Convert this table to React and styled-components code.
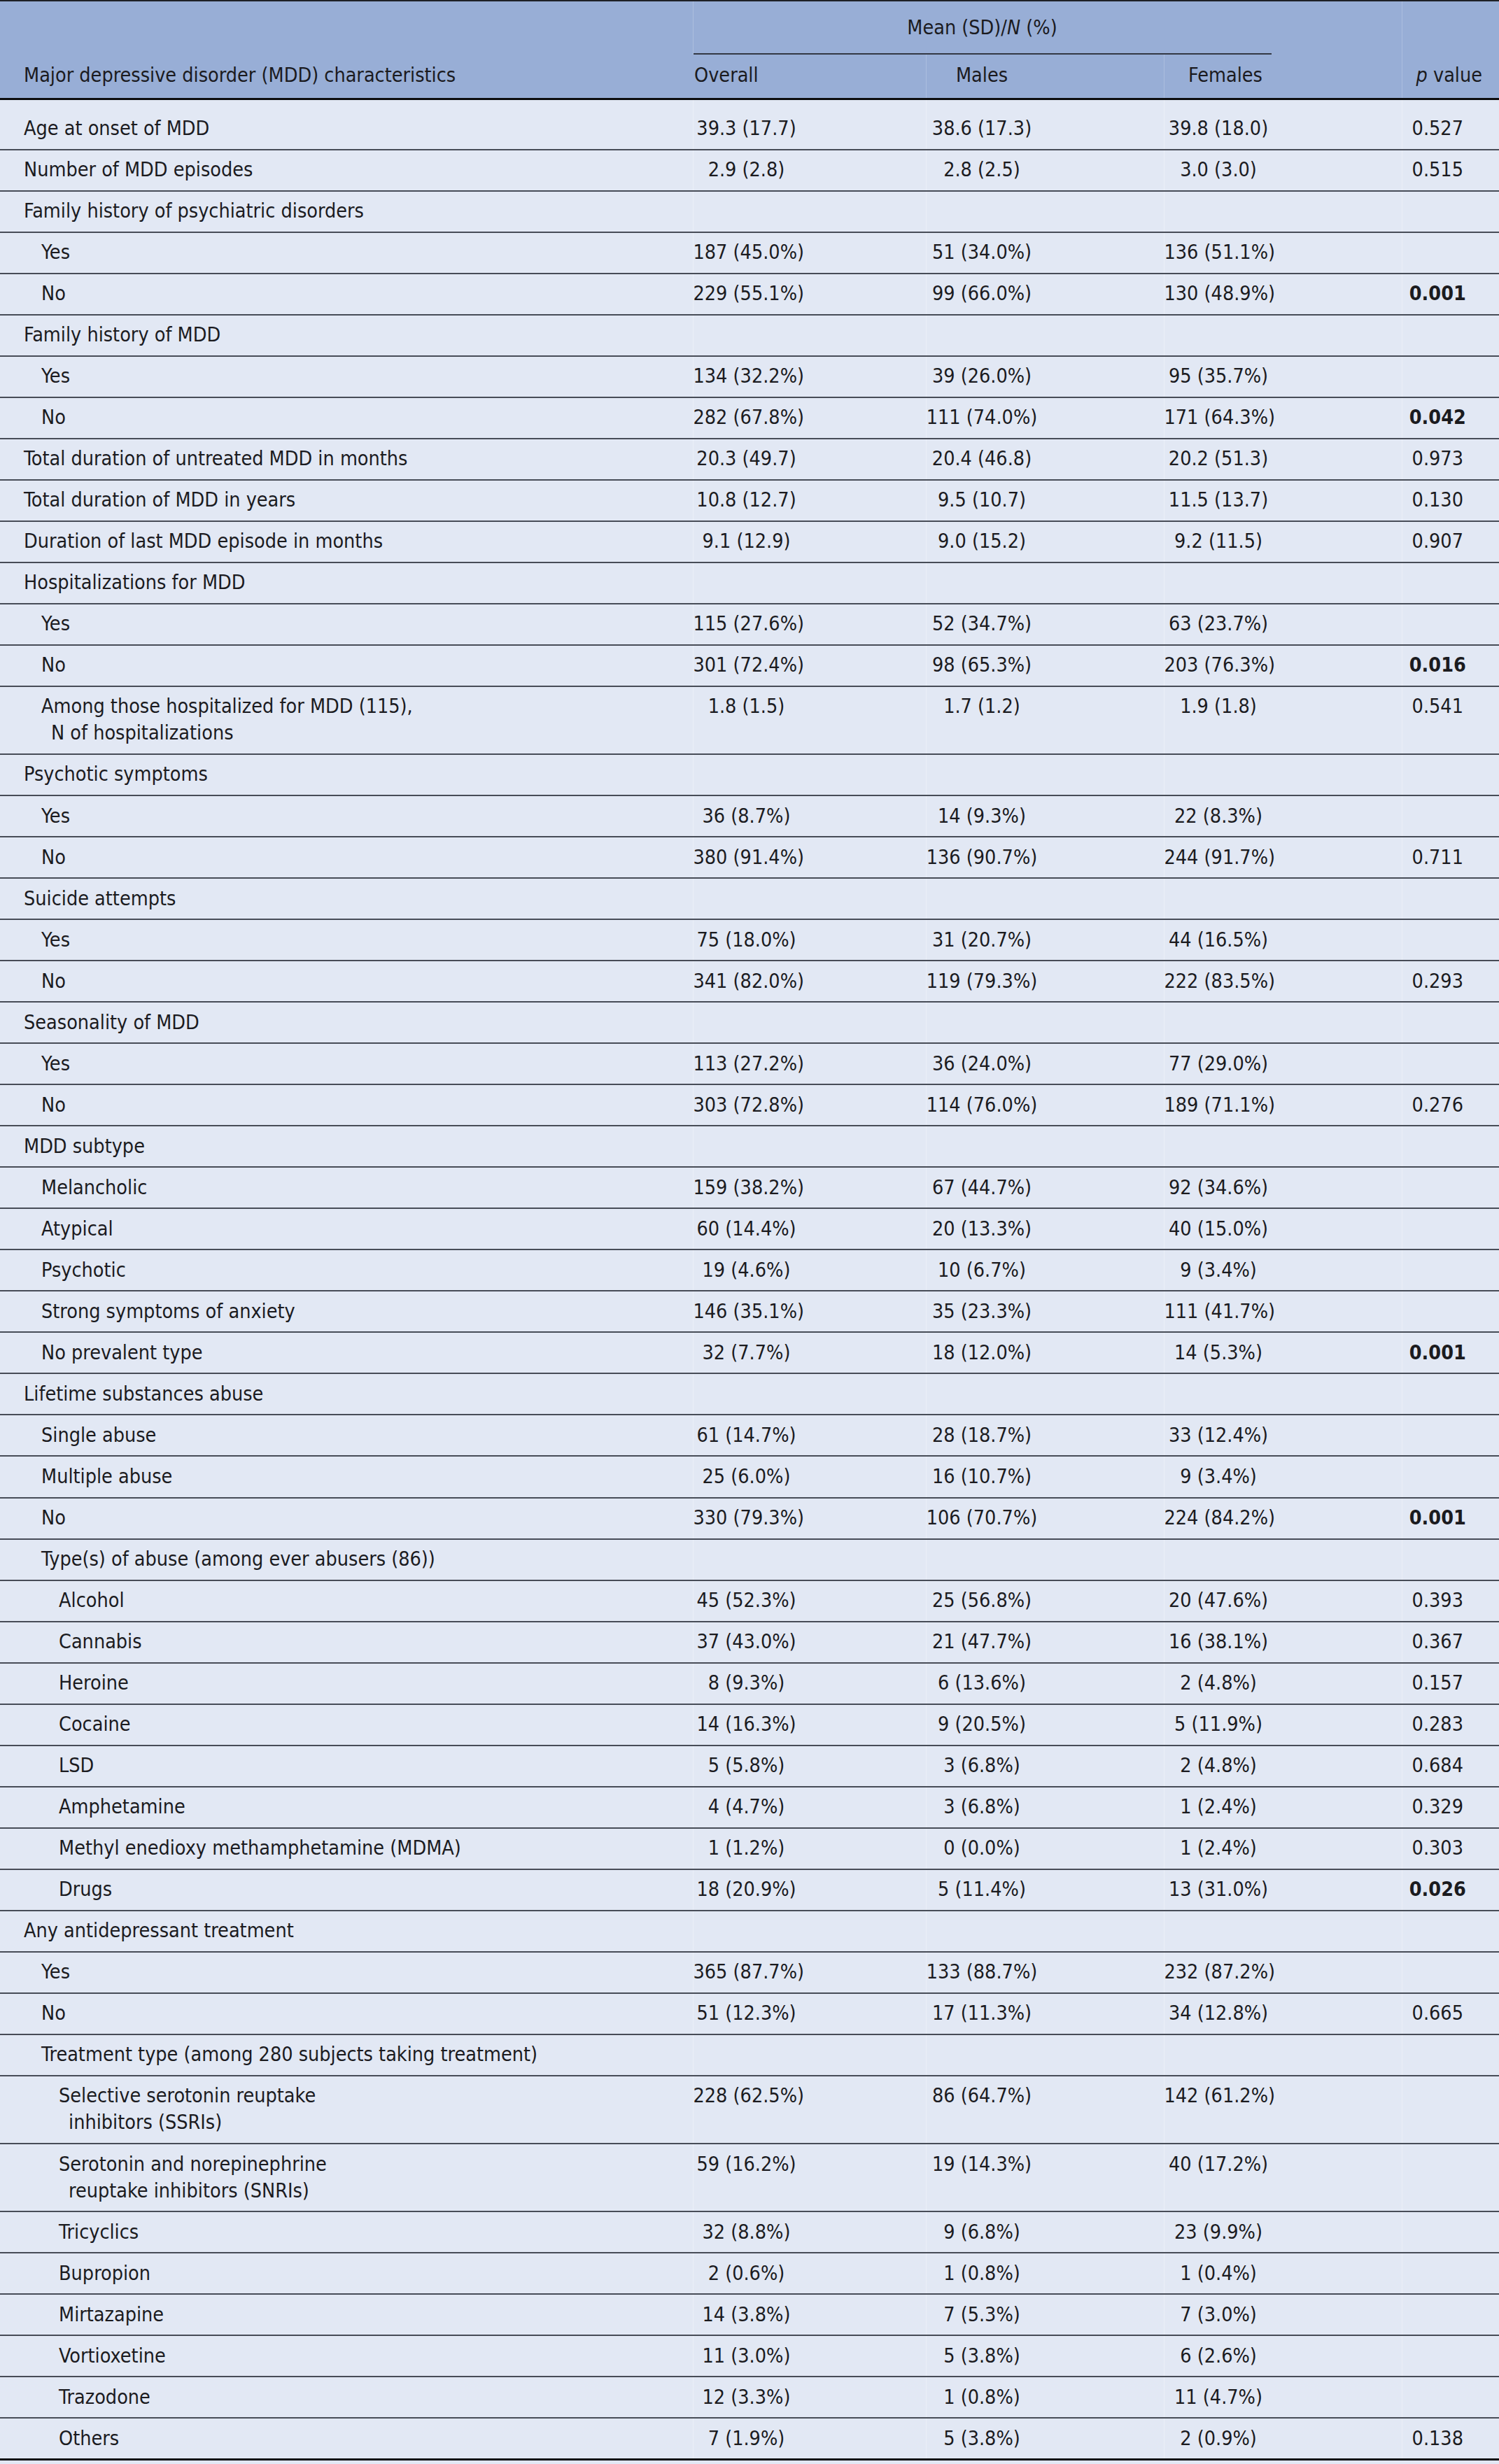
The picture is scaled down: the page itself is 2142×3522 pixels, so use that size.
import React from "react";
import styled, { createGlobalStyle } from "styled-components";

const GlobalStyle = createGlobalStyle`
  html, body { margin: 0; padding: 0; background: #e2e8f4; }
  body {
    font-family: "Liberation Sans Narrow", "DejaVu Sans Condensed", "Roboto Condensed", "Liberation Sans", sans-serif;
    color: #1b1b1f;
  }
`;

const Table = styled.table`
  width: 2142px;
  table-layout: fixed;
  border-collapse: collapse;
  font-size: 28.5px;
  background: #e2e8f4;
  border-top: 2px solid #1e2026;
  border-bottom: 3px solid #0d0e10;
`;

const Head = styled.thead`
  background: #98aed6;
  border-bottom: 3px solid #0d0e10;
`;

const HeadCell = styled.th`
  padding: 11px ${(p) => p.$pr || 0}px 13px ${(p) => p.$pl || 0}px;
  font-weight: 400;
  line-height: 38px;
  vertical-align: bottom;
  text-align: ${(p) => p.$align || "center"};
  white-space: nowrap;
  border-left: ${(p) => (p.$divider ? "1px solid rgba(255,255,255,0.2)" : "none")};
`;

const GroupCell = styled.th`
  padding: 0;
  font-weight: 400;
  height: 76px;
  vertical-align: top;
  border-left: 1px solid rgba(255, 255, 255, 0.2);
`;

const GroupLabel = styled.div`
  width: 826px;
  height: 74px;
  line-height: 76px;
  text-align: center;
  border-bottom: 2px solid #333844;
`;

const Row = styled.tr`
  border-bottom: 2px solid #474c57;
`;

const LabelCell = styled.td`
  line-height: 38px;
  padding: ${(p) => (p.$first ? "22px" : "9.53px")} 0 9.53px ${(p) => 34 + p.$level * 25 + 14}px;
  text-indent: -14px;
  vertical-align: top;
  white-space: pre-line;
`;

const ValueCell = styled.td`
  line-height: 38px;
  padding: ${(p) => (p.$first ? "22px" : "9.53px")} ${(p) => p.$pr}px 9.53px 0;
  text-align: center;
  vertical-align: top;
  white-space: nowrap;
  font-weight: ${(p) => (p.$bold ? 700 : 400)};
  border-left: 1px solid rgba(255, 255, 255, 0.3);
`;

const Italic = styled.i`
  font-style: italic;
`;

const rows = [
  ["Age at onset of MDD", 0, "39.3 (17.7)", "38.6 (17.3)", "39.8 (18.0)", "0.527"],
  ["Number of MDD episodes", 0, "2.9 (2.8)", "2.8 (2.5)", "3.0 (3.0)", "0.515"],
  ["Family history of psychiatric disorders", 0],
  ["Yes", 1, "187 (45.0%)", "51 (34.0%)", "136 (51.1%)"],
  ["No", 1, "229 (55.1%)", "99 (66.0%)", "130 (48.9%)", "0.001", true],
  ["Family history of MDD", 0],
  ["Yes", 1, "134 (32.2%)", "39 (26.0%)", "95 (35.7%)"],
  ["No", 1, "282 (67.8%)", "111 (74.0%)", "171 (64.3%)", "0.042", true],
  ["Total duration of untreated MDD in months", 0, "20.3 (49.7)", "20.4 (46.8)", "20.2 (51.3)", "0.973"],
  ["Total duration of MDD in years", 0, "10.8 (12.7)", "9.5 (10.7)", "11.5 (13.7)", "0.130"],
  ["Duration of last MDD episode in months", 0, "9.1 (12.9)", "9.0 (15.2)", "9.2 (11.5)", "0.907"],
  ["Hospitalizations for MDD", 0],
  ["Yes", 1, "115 (27.6%)", "52 (34.7%)", "63 (23.7%)"],
  ["No", 1, "301 (72.4%)", "98 (65.3%)", "203 (76.3%)", "0.016", true],
  ["Among those hospitalized for MDD (115),\nN of hospitalizations", 1, "1.8 (1.5)", "1.7 (1.2)", "1.9 (1.8)", "0.541"],
  ["Psychotic symptoms", 0],
  ["Yes", 1, "36 (8.7%)", "14 (9.3%)", "22 (8.3%)"],
  ["No", 1, "380 (91.4%)", "136 (90.7%)", "244 (91.7%)", "0.711"],
  ["Suicide attempts", 0],
  ["Yes", 1, "75 (18.0%)", "31 (20.7%)", "44 (16.5%)"],
  ["No", 1, "341 (82.0%)", "119 (79.3%)", "222 (83.5%)", "0.293"],
  ["Seasonality of MDD", 0],
  ["Yes", 1, "113 (27.2%)", "36 (24.0%)", "77 (29.0%)"],
  ["No", 1, "303 (72.8%)", "114 (76.0%)", "189 (71.1%)", "0.276"],
  ["MDD subtype", 0],
  ["Melancholic", 1, "159 (38.2%)", "67 (44.7%)", "92 (34.6%)"],
  ["Atypical", 1, "60 (14.4%)", "20 (13.3%)", "40 (15.0%)"],
  ["Psychotic", 1, "19 (4.6%)", "10 (6.7%)", "9 (3.4%)"],
  ["Strong symptoms of anxiety", 1, "146 (35.1%)", "35 (23.3%)", "111 (41.7%)"],
  ["No prevalent type", 1, "32 (7.7%)", "18 (12.0%)", "14 (5.3%)", "0.001", true],
  ["Lifetime substances abuse", 0],
  ["Single abuse", 1, "61 (14.7%)", "28 (18.7%)", "33 (12.4%)"],
  ["Multiple abuse", 1, "25 (6.0%)", "16 (10.7%)", "9 (3.4%)"],
  ["No", 1, "330 (79.3%)", "106 (70.7%)", "224 (84.2%)", "0.001", true],
  ["Type(s) of abuse (among ever abusers (86))", 1],
  ["Alcohol", 2, "45 (52.3%)", "25 (56.8%)", "20 (47.6%)", "0.393"],
  ["Cannabis", 2, "37 (43.0%)", "21 (47.7%)", "16 (38.1%)", "0.367"],
  ["Heroine", 2, "8 (9.3%)", "6 (13.6%)", "2 (4.8%)", "0.157"],
  ["Cocaine", 2, "14 (16.3%)", "9 (20.5%)", "5 (11.9%)", "0.283"],
  ["LSD", 2, "5 (5.8%)", "3 (6.8%)", "2 (4.8%)", "0.684"],
  ["Amphetamine", 2, "4 (4.7%)", "3 (6.8%)", "1 (2.4%)", "0.329"],
  ["Methyl enedioxy methamphetamine (MDMA)", 2, "1 (1.2%)", "0 (0.0%)", "1 (2.4%)", "0.303"],
  ["Drugs", 2, "18 (20.9%)", "5 (11.4%)", "13 (31.0%)", "0.026", true],
  ["Any antidepressant treatment", 0],
  ["Yes", 1, "365 (87.7%)", "133 (88.7%)", "232 (87.2%)"],
  ["No", 1, "51 (12.3%)", "17 (11.3%)", "34 (12.8%)", "0.665"],
  ["Treatment type (among 280 subjects taking treatment)", 1],
  ["Selective serotonin reuptake\ninhibitors (SSRIs)", 2, "228 (62.5%)", "86 (64.7%)", "142 (61.2%)"],
  ["Serotonin and norepinephrine\nreuptake inhibitors (SNRIs)", 2, "59 (16.2%)", "19 (14.3%)", "40 (17.2%)"],
  ["Tricyclics", 2, "32 (8.8%)", "9 (6.8%)", "23 (9.9%)"],
  ["Bupropion", 2, "2 (0.6%)", "1 (0.8%)", "1 (0.4%)"],
  ["Mirtazapine", 2, "14 (3.8%)", "7 (5.3%)", "7 (3.0%)"],
  ["Vortioxetine", 2, "11 (3.0%)", "5 (3.8%)", "6 (2.6%)"],
  ["Trazodone", 2, "12 (3.3%)", "1 (0.8%)", "11 (4.7%)"],
  ["Others", 2, "7 (1.9%)", "5 (3.8%)", "2 (0.9%)", "0.138"],
];

export default function App() {
  return (
    <>
      <GlobalStyle />
      <Table>
        <colgroup>
          <col style={{ width: 990 }} />
          <col style={{ width: 333 }} />
          <col style={{ width: 340 }} />
          <col style={{ width: 340 }} />
          <col style={{ width: 139 }} />
        </colgroup>
        <Head>
          <tr>
            <HeadCell rowSpan={2} $align="left" $pl={34}>
              Major depressive disorder (MDD) characteristics
            </HeadCell>
            <GroupCell colSpan={3}>
              <GroupLabel>
                Mean (SD)/<Italic>N</Italic> (%)
              </GroupLabel>
            </GroupCell>
            <HeadCell rowSpan={2} $align="left" $pl={20} $divider>
              <Italic>p</Italic> value
            </HeadCell>
          </tr>
          <tr>
            <HeadCell $align="left" $pl={2}>
              Overall
            </HeadCell>
            <HeadCell $pr={180} $divider>
              Males
            </HeadCell>
            <HeadCell $pr={164} $divider>
              Females
            </HeadCell>
          </tr>
        </Head>
        <tbody>
          {rows.map(([label, level, o, m, f, p, bold], i) => (
            <Row key={i}>
              <LabelCell $level={level} $first={i === 0}>
                {label}
              </LabelCell>
              <ValueCell $pr={180} $first={i === 0}>{o}</ValueCell>
              <ValueCell $pr={180} $first={i === 0}>{m}</ValueCell>
              <ValueCell $pr={184} $first={i === 0}>{f}</ValueCell>
              <ValueCell $pr={37} $first={i === 0} $bold={bold}>
                {p}
              </ValueCell>
            </Row>
          ))}
        </tbody>
      </Table>
    </>
  );
}
